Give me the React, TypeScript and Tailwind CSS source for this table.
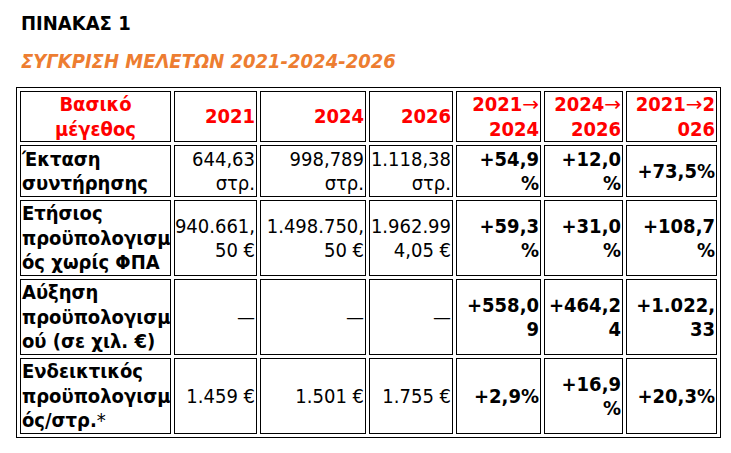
const font = { fontFamily: '"DejaVu Sans Condensed", "DejaVu Sans", Verdana, sans-serif' };
const arrowFont = { fontFamily: '"DejaVu Sans", sans-serif' };

type Row = { label: React.ReactNode; values: string[] };

const Arrow = () => (
  <span className="font-normal font-stretch-normal" style={arrowFont}>→</span>
);

const header: React.ReactNode[] = [
  "2021",
  "2024",
  "2026",
  <>2021<Arrow />{"\n"}2024</>,
  <>2024<Arrow />{"\n"}2026</>,
  <>2021<Arrow />2{"\n"}026</>,
];

const rows: Row[] = [
  { label: "Έκταση\nσυντήρησης", values: ["644,63\nστρ.", "998,789\nστρ.", "1.118,38\nστρ.", "+54,9\n%", "+12,0\n%", "+73,5%"] },
  { label: "Ετήσιος\nπροϋπολογισμ\nός χωρίς ΦΠΑ", values: ["940.661,\n50 €", "1.498.750,\n50 €", "1.962.99\n4,05 €", "+59,3\n%", "+31,0\n%", "+108,7\n%"] },
  { label: "Αύξηση\nπροϋπολογισμ\nού (σε χιλ. €)", values: ["—", "—", "—", "+558,0\n9", "+464,2\n4", "+1.022,\n33"] },
  {
    label: <>Ενδεικτικός{"\n"}προϋπολογισμ{"\n"}ός/στρ.<span className="font-normal">*</span></>,
    values: ["1.459 €", "1.501 €", "1.755 €", "+2,9%", "+16,9\n%", "+20,3%"],
  },
];

const cell = "border border-black flex items-center px-px whitespace-pre leading-[24.5px] text-[20px] font-stretch-condensed";

export default function App() {
  return (
    <div className="bg-white w-[731px] h-[453px] pt-[11px] pl-[16px]" style={font}>
      <h1 className="pl-[5px] text-[20px] leading-[24px] font-bold text-black font-stretch-condensed">ΠΙΝΑΚΑΣ 1</h1>
      <h2 className="mt-[14px] pl-[5px] text-[20px] leading-[24px] font-bold italic text-[#ED7D31] font-stretch-condensed">
        ΣΥΓΚΡΙΣΗ ΜΕΛΕΤΩΝ 2021-2024-2026
      </h2>

      <div className="mt-[14px] w-fit border border-black p-[3px] grid gap-[3px] grid-cols-[151px_83px_106px_84px_85px_79px_91px] grid-rows-[51px_52px_76px_76px_76px]">
        <div className={`${cell} justify-center text-center font-bold text-[#FF0000]`}>
          <span>{"Βασικό\nμέγεθος"}</span>
        </div>
        {header.map((h, i) => (
          <div key={i} className={`${cell} justify-end text-right font-bold text-[#FF0000]`}>
            <span>{h}</span>
          </div>
        ))}

        {rows.map((r, ri) => (
          <div key={ri} className="contents">
            <div className={`${cell} justify-start text-left font-bold text-black`}>
              <span>{r.label}</span>
            </div>
            {r.values.map((v, vi) => (
              <div key={vi} className={`${cell} justify-end text-right text-black ${vi >= 3 ? "font-bold" : "font-normal"}`}>
                <span>{v}</span>
              </div>
            ))}
          </div>
        ))}
      </div>
    </div>
  );
}
